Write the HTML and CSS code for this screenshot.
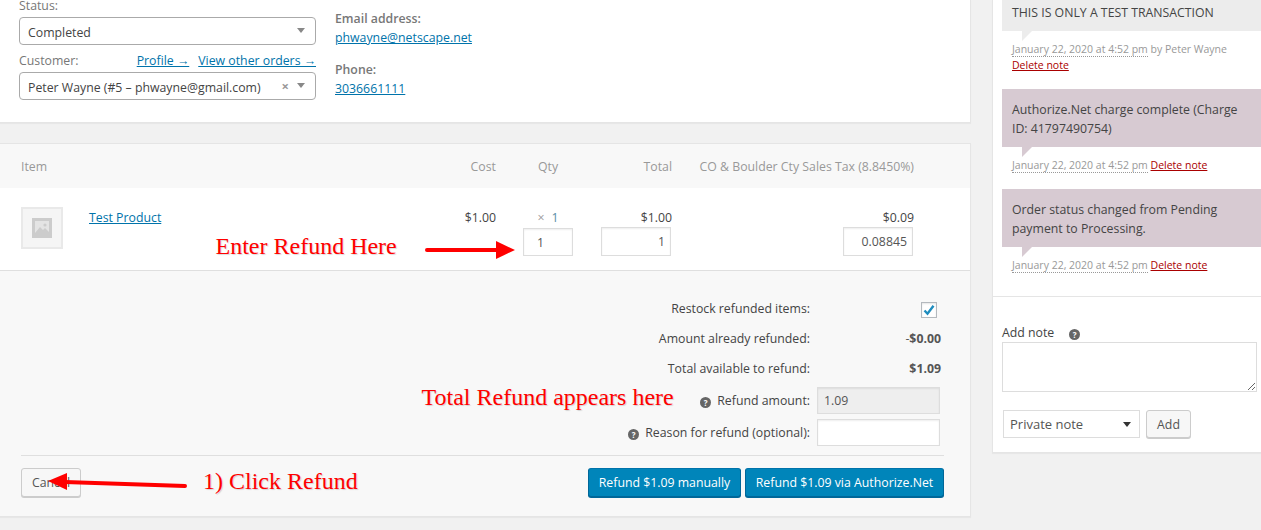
FILE: index.html
```html
<!DOCTYPE html>
<html lang="en">
<head>
<meta charset="utf-8">
<title>Order refund</title>
<link rel="stylesheet" href="styles.css">
</head>
<body>
<div class="layout">
  <main class="main">
    <section class="panel top">
      <div class="col-left">
        <div class="lab">Status:</div>
        <div class="sel2"><span>Completed</span><i class="caret"></i></div>
        <div class="cust-head"><span class="lab">Customer:</span><span class="links"><a href="#">Profile →</a><a href="#">View other orders →</a></span></div>
        <div class="sel2"><span>Peter Wayne (#5 – phwayne@gmail.com)</span><b class="clear">×</b><i class="caret"></i></div>
      </div>
      <div class="col-right">
        <div class="strong">Email address:</div>
        <a href="#">phwayne@netscape.net</a>
        <div class="strong phone">Phone:</div>
        <a href="#">3036661111</a>
      </div>
    </section>
    <section class="panel order">
      <div class="grid head">
        <div>Item</div><div class="r">Cost</div><div class="qty-h">Qty</div><div class="r">Total</div><div class="r">CO &amp; Boulder Cty Sales Tax (8.8450%)</div>
      </div>
      <div class="grid item">
        <div class="item-main">
          <div class="thumb"><svg width="20" height="20" viewBox="0 0 20 20"><rect width="20" height="20" fill="#ccc"/><rect x="3" y="3" width="14" height="14" fill="#e4e4e4"/><path d="M3 15l5-6 3 3 2-2 4 4v3H3z" fill="#ccc"/><circle cx="13" cy="7" r="1.6" fill="#ccc"/></svg></div>
          <a href="#">Test Product</a>
        </div>
        <div class="r">$1.00</div>
        <div class="qty"><div class="qty-v"><span class="times">×</span><span class="qn">1</span></div><input class="in in-q" value="1" aria-label="Refund quantity"></div>
        <div class="r"><div>$1.00</div><input class="in in-t" value="1" aria-label="Refund total"></div>
        <div class="r"><div>$0.09</div><input class="in in-t" value="0.08845" aria-label="Refund tax"></div>
      </div>
      <div class="foot">
        <div class="rows">
          <div class="row"><div class="rl">Restock refunded items:</div><div class="rv"><span class="check"><svg width="14" height="14" viewBox="0 0 14 14"><path d="M2.5 7.5l3 3.2 6-8" fill="none" stroke="#1e8cbe" stroke-width="2.4"/></svg></span></div></div>
          <div class="row"><div class="rl">Amount already refunded:</div><div class="rv"><span class="neg">-</span><b>$0.00</b></div></div>
          <div class="row"><div class="rl">Total available to refund:</div><div class="rv"><b>$1.09</b></div></div>
          <div class="row tall"><div class="rl"><span class="help">?</span>Refund amount:</div><div class="rf"><input class="in in-r dis" value="1.09" aria-label="Refund amount" readonly></div></div>
          <div class="row tall"><div class="rl"><span class="help">?</span>Reason for refund (optional):</div><div class="rf"><input class="in in-r" aria-label="Reason for refund"></div></div>
        </div>
        <div class="actions">
          <button class="btn" type="button">Cancel</button>
          <div class="primary"><button class="btn pri m" type="button">Refund $1.09 manually</button><button class="btn pri a" type="button">Refund $1.09 via Authorize.Net</button></div>
        </div>
      </div>
    </section>
  </main>
  <aside class="side">
    <section class="panel notes">
      <div class="note grey one"><p>THIS IS ONLY A TEST TRANSACTION</p></div>
      <div class="meta"><span class="date">January 22, 2020 at 4:52 pm</span> by Peter Wayne<br><a class="del" href="#">Delete note</a></div>
      <div class="note mauve"><p>Authorize.Net charge complete (Charge ID: 41797490754)</p></div>
      <div class="meta"><span class="date">January 22, 2020 at 4:52 pm</span> <a class="del" href="#">Delete note</a></div>
      <div class="note mauve"><p>Order status changed from Pending payment to Processing.</p></div>
      <div class="meta"><span class="date">January 22, 2020 at 4:52 pm</span> <a class="del" href="#">Delete note</a></div>
    </section>
    <section class="panel add">
      <div class="add-label">Add note<span class="help">?</span></div>
      <textarea class="ta" aria-label="Add note"></textarea>
      <div class="add-row"><div class="nsel">Private note<i class="caret dark"></i></div><button class="btn addb" type="button">Add</button></div>
    </section>
  </aside>
</div>
<div class="ann ann1">Enter Refund Here</div>
<div class="ann ann2">Total Refund appears here</div>
<div class="ann ann3">1) Click Refund</div>
<svg class="arrow arrow1" width="92" height="22" viewBox="0 0 92 22"><path d="M3 11H74" stroke="#f00" stroke-width="4" stroke-linecap="round"/><path d="M72 2L91 11L72 20z" fill="#f00"/></svg>
<svg class="arrow arrow2" width="142" height="22" viewBox="0 0 142 22"><path d="M138 15L18 11" stroke="#f00" stroke-width="4" stroke-linecap="round"/><path d="M20 2L1 10L20 19z" fill="#f00"/></svg>
</body>
</html>
```
FILE: styles.css
```css
* { box-sizing: border-box; }
html, body { margin: 0; height: 530px; overflow: hidden; }
body { position: relative; background: #f1f1f1; color: #444; font: 12.3px/18px "Open Sans", "Liberation Sans", sans-serif; }
a { color: #0073aa; text-decoration: underline; }
p { margin: 0; }
.layout { display: flex; align-items: flex-start; }
.main { width: 971px; flex: none; }
.side { width: 269px; margin-left: 21px; flex: none; }
.panel { background: #fff; border: 1px solid #e5e5e5; box-shadow: 0 1px 1px rgba(0,0,0,.04); }

.top { height: 123px; display: flex; border-width: 0 1px 1px 0; padding: 0 0 0 19px; }
.col-left { width: 297px; margin-top: -3px; }
.lab { color: #777; }
.sel2 { height: 28px; margin-top: 2px; border: 1px solid #aaa; border-radius: 4px; display: flex; align-items: center; padding: 4px 8px 0; color: #444; }
.sel2 span:first-child { flex: 1; }
.caret { width: 0; height: 0; border: 4px solid transparent; border-top: 5px solid #888; border-bottom: 0; margin: -6px 2px 0 0; }
.clear { color: #999; font-weight: 700; margin: -4px 8px 0 0; font-size: 13px; }
.cust-head { display: flex; justify-content: space-between; margin-top: 7px; }
.links a { margin-left: 9px; }
.col-right { margin-left: 19px; padding-top: 10px; }
.col-right a { display: block; margin-top: 1px; }
.strong { color: #777; font-weight: 600; }
.phone { margin-top: 14px; }

.order { margin-top: 20px; height: 374px; border-width: 1px 1px 1px 0; }
.grid { display: grid; grid-template-columns: 419px 56px 77px 99px 242px; padding-left: 21px; }
.r { text-align: right; }
.head { height: 44px; padding-top: 2px; background: #f8f8f8; align-items: center; color: #999; }
.qty-h { padding-left: 27px; text-align: center; }
.item { height: 83px; padding-top: 21px; border-bottom: 1px solid #dfdfdf; }
.item-main { display: flex; gap: 26px; }
.thumb { width: 42px; height: 42px; margin-top: -2px; border: 2px solid #e9e9e9; background: #f5f5f5; display: flex; align-items: center; justify-content: center; }
.qty { padding-left: 27px; }
.qty-v { text-align: center; color: #777; }
.times { color: #999; margin-right: 7px; }
.qn { color: #5b8ea6; }
.in { display: block; border: 1px solid #ddd; background: #fff; color: #555; font: inherit; height: 28px; padding: 0 5px; box-shadow: inset 0 1px 2px rgba(0,0,0,.07); outline: 0; }
.in-q { width: 50px; padding-left: 13px; margin-top: 1px; height: 28px; }
.in-t { width: 70px; height: 29px; text-align: right; margin: 0 1px 0 auto; }

.foot { height: 245px; background: #f8f8f8; padding: 23px 26px 0 21px; }
.rows { height: 161px; }
.row { display: grid; grid-template-columns: 789px 1fr; column-gap: 7px; height: 30px; align-items: center; }
.row.tall { height: 32px; }
.row.tall .rl { padding-top: 2px; }
.rl { text-align: right; }
.rv { text-align: right; padding-right: 3px; color: #555; }
.rv b { font-weight: 700; }
.neg { font-weight: 400; }
.check { display: inline-block; width: 16px; height: 16px; border: 1px solid #b4b9be; background: #fff; margin-right: 4px; vertical-align: middle; box-shadow: inset 0 1px 2px rgba(0,0,0,.1); }
.check svg { display: block; margin: 0; }
.in-r { width: 123px; height: 27px; padding-left: 6px; border-width: 1px; }
.dis { background: #eee; color: #555; border-color: #ddd; }
.help { display: inline-block; width: 11px; height: 11px; line-height: 11px; border-radius: 50%; background: #666; color: #fff; font-size: 8px; font-weight: 700; text-align: center; margin-right: 6px; vertical-align: -1px; }
.actions { border-top: 1px solid #dfdfdf; padding-top: 12px; display: flex; justify-content: space-between; }
.primary { display: flex; gap: 4px; }
.btn { height: 29px; border: 1px solid #ccc; border-radius: 3px; background: #f7f7f7; color: #555; box-shadow: 0 1px 0 #ccc; font: inherit; padding: 0; width: 60px; }
.pri { background: #0085ba; border-color: #0073aa #006799 #006799; color: #fff; box-shadow: 0 1px 0 #006799; }
.m { width: 153px; }
.a { width: 199px; }

.notes { height: 297px; border-width: 0 0 1px 1px; padding-left: 9px; overflow: hidden; }
.note { padding: 11px 10px 0; margin-right: -1px; position: relative; line-height: 19px; }
.one { height: 31px; padding-top: 3px; }
.grey { background: #ececec; }
.mauve { background: #d7cad2; height: 58px; }
.note::after { content: ""; position: absolute; left: 20px; top: 100%; border-style: solid; border-width: 10px 10px 0 0; border-color: #ececec transparent transparent; }
.mauve::after { border-top-color: #d7cad2; }
.meta { margin: 10px 0 0 10px; font-size: 10.5px; line-height: 16px; color: #999; }
.date { border-bottom: 1px dotted #999; }
.del { color: #a00; }
.mauve + .meta { height: 32px; }
.one + .meta { height: 48px; }

.add { height: 156px; border-width: 0 0 1px 1px; padding: 27px 0 0 9px; }
.add-label .help { margin: 0 0 0 15px; }
.ta { display: block; width: 255px; height: 50px; border: 1px solid #ddd; background: #fff; margin-top: 0; }
.add-row { display: flex; gap: 6px; margin: 18px 0 0 1px; }
.nsel { width: 137px; height: 28px; border: 1px solid #ddd; background: #fff; display: flex; align-items: center; justify-content: space-between; padding: 0 6px; color: #555; font-size: 13px; }
.dark { border-top-color: #333; border-width: 5px 4px 0; margin: 0 2px 0 0; }
.addb { width: 45px; height: 28px; padding-top: 2px; }

.ann { position: absolute; color: #f00; font: 24px/28px "Liberation Serif", serif; text-shadow: 1px 1px 1px rgba(0,0,0,.15); white-space: nowrap; }
.ann1 { left: 215.5px; top: 232px; }
.ann2 { left: 421.5px; top: 383px; }
.ann3 { left: 203px; top: 467px; }
.arrow { position: absolute; }
.arrow1 { left: 424px; top: 239px; }
.arrow2 { left: 47px; top: 471px; }
```
